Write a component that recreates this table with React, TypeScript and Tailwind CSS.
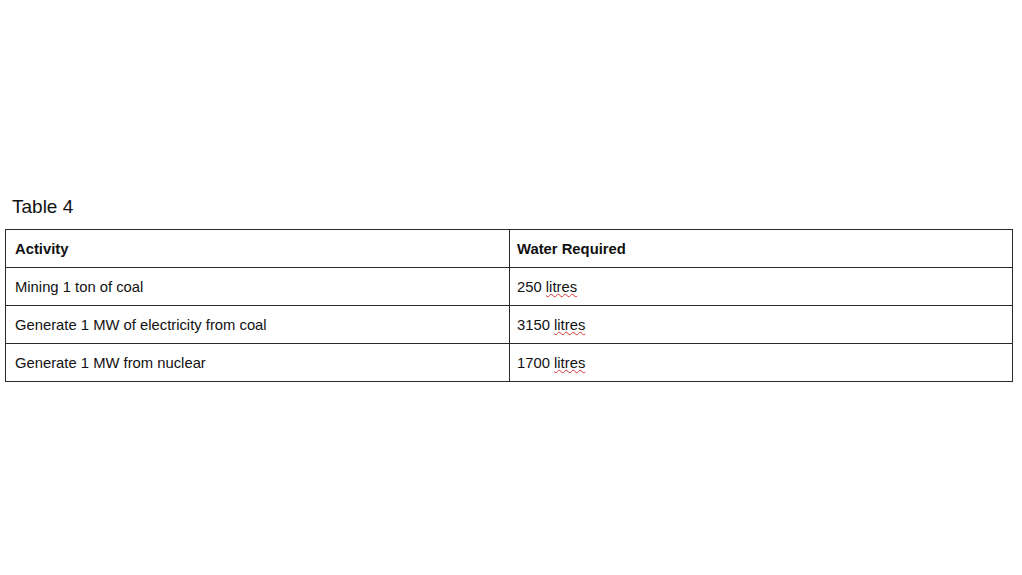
const rows = [
  { activity: 'Mining 1 ton of coal', amount: '250' },
  { activity: 'Generate 1 MW of electricity from coal', amount: '3150' },
  { activity: 'Generate 1 MW from nuclear', amount: '1700' },
];

export default function App() {
  return (
    <div className="w-[1022px] h-[575px] bg-white font-['Liberation_Sans',Arial,sans-serif] text-[#111] pt-[195px] pl-[5px]">
      <div className="pl-[7px] text-[19px] leading-[24px] mb-[10px]">Table 4</div>
      <table className="w-[1008px] border-collapse text-[14.8px]">
        <tbody>
          <tr className="h-[38px]">
            <td className="w-[504px] border border-[#2a2a2a] px-[9px] pt-[1px] font-bold">Activity</td>
            <td className="border border-[#2a2a2a] px-[7px] pt-[1px] font-bold">Water Required</td>
          </tr>
          {rows.map((r) => (
            <tr key={r.activity} className="h-[38px]">
              <td className="border border-[#2a2a2a] px-[9px] pt-[1px]">{r.activity}</td>
              <td className="border border-[#2a2a2a] px-[7px] pt-[1px]">
                {r.amount}{' '}
                <span className="underline decoration-wavy decoration-[#d33] decoration-1 underline-offset-1">
                  litres
                </span>
              </td>
            </tr>
          ))}
        </tbody>
      </table>
    </div>
  );
}
